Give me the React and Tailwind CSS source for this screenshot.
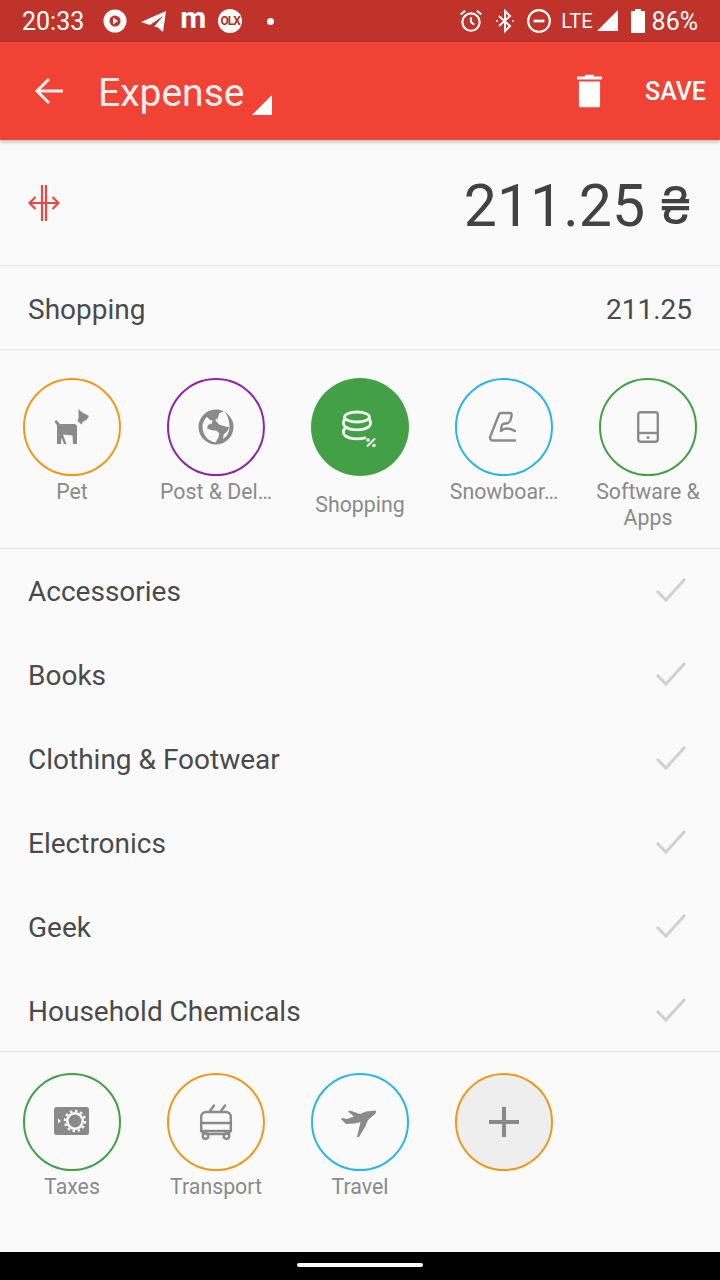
const Glyph = ({ children, ...rest }) => (
  <svg width="54" height="54" viewBox="0 0 54 54" {...rest}>
    {children}
  </svg>
);

const icons = {
  pet: (
    <Glyph fill="currentColor">
      <path d="M9.500 21.500l2-1.500 3.500 4h15l2 2v18h-4l-.5-8.500-9.500-1 3.500 9.500h-2.500l-2.500-6.500-.5 6.500H12V25.500z" />
      <path d="M33.500 9l3 3 7.500 4-2.500 4-3.500 1.500-1.500 3-4-3.500 1-3z" />
    </Glyph>
  ),
  globe: (
    <Glyph fill="currentColor">
      <path
        fillRule="evenodd"
        d="M27 9.500a17.500 17.500 0 1 0 0 35 17.500 17.500 0 0 0 0-35zM13.500 27c0-4 1.700-7.500 4.300-10 1.500.6 2 2 3.100 3l2.700.4-.8 3-3.900 1.500-.8 3.500 3.900 1.500 5.500.8 2.900 2.700-1.200 4.500-2.900 4.500C18.800 41 13.500 34.500 13.500 27zm20.500 12l.6-4.300 3.900-3.900 1.900-3.500-4.900-1-5.400-1.900-3.900-4.500 2.500-1.400 1.600-5.200 4.700-2.300C38 14 40.500 20 40.500 27c0 5-2.700 9.500-6.500 12z"
      />
    </Glyph>
  ),
  coins: (
    <Glyph fill="none" stroke="currentColor" strokeWidth="2.800" strokeLinecap="round">
      <ellipse cx="24" cy="17" rx="12.500" ry="5" />
      <path d="M12 19c-2.500 3-2 6 .5 8 2.500 1.800 7 2.800 11.500 2.800s9-1 11.500-2.800c2.500-2 3-5 .5-8" />
      <path d="M12 28c-2.500 3-2 6 .5 8 2.500 1.800 7 2.800 11.500 2.800 3 0 5.500-.3 8-1" />
      <path d="M34.500 46l7-7" strokeWidth="2" />
      <circle cx="35" cy="40" r="1.800" fill="currentColor" stroke="none" />
      <circle cx="41" cy="45.500" r="1.800" fill="currentColor" stroke="none" />
    </Glyph>
  ),
  snowboard: (
    <Glyph fill="none" stroke="currentColor" strokeWidth="2.400" strokeLinecap="round" strokeLinejoin="round">
      <path d="M38 40.500H16C13 40.500 12.500 38 13.500 36L22 14.500Q22.500 13 24 13H33Q35 13 34.500 16L33.500 20Q33 22 31 23L26 24Q24 25 24 31Q29 26 38 31" />
    </Glyph>
  ),
  phone: (
    <Glyph fill="none" stroke="currentColor" strokeWidth="2.400">
      <rect x="17.200" y="12.200" width="19.600" height="29.600" rx="2.500" />
      <path d="M17 33h20" />
      <circle cx="27" cy="37.400" r="1.500" fill="currentColor" stroke="none" />
    </Glyph>
  ),
  taxes: (
    <Glyph>
      <rect x="9" y="12" width="35" height="28" rx="2.500" fill="currentColor" />
      <circle cx="30" cy="26" r="10" fill="none" stroke="#fafafa" strokeWidth="2.400" strokeDasharray="2.600 2.600" />
      <circle cx="30" cy="26" r="7.700" fill="none" stroke="#fafafa" strokeWidth="2.600" />
      <path d="M13 23.500l3 2.500-3 2.500z" fill="#fafafa" />
    </Glyph>
  ),
  trolley: (
    <Glyph fill="none" stroke="currentColor" strokeWidth="2.400" strokeLinecap="round">
      <path d="M21 16l4-5.500M32 16l4-5.500" />
      <rect x="12.200" y="17" width="29.600" height="22" rx="5" />
      <path d="M12 28h30M12 36h30" />
      <circle cx="16.500" cy="41" r="2.800" />
      <circle cx="37.500" cy="41" r="2.800" />
    </Glyph>
  ),
  plane: (
    <Glyph fill="currentColor">
      <path d="M42.500 15.500L33 16.500L27 19L17 15.500L15 16.500L21 21.500L14 24L9 23L8 24L13 29L22 28.500L27.500 27L24 42L26 42L32 32L35 25L42 19Q44 16 42.500 15.500z" />
    </Glyph>
  ),
};

const top = [
  { label: 'Pet', icon: 'pet', ring: 'border-[#f09819]' },
  { label: 'Post & Del…', icon: 'globe', ring: 'border-[#8e24aa]' },
  { label: 'Shopping', icon: 'coins', selected: true },
  { label: 'Snowboar…', icon: 'snowboard', ring: 'border-[#29b6e6]' },
  { label: ['Software &', 'Apps'], icon: 'phone', ring: 'border-[#43a047]' },
];

const bottom = [
  { label: 'Taxes', icon: 'taxes', ring: 'border-[#43a047]' },
  { label: 'Transport', icon: 'trolley', ring: 'border-[#f09819]' },
  { label: 'Travel', icon: 'plane', ring: 'border-[#29b6e6]' },
];

const subs = ['Accessories', 'Books', 'Clothing & Footwear', 'Electronics', 'Geek', 'Household Chemicals'];

function Category({ item }) {
  const lines = Array.isArray(item.label) ? item.label : [item.label];
  return (
    <div className="w-[144px] flex flex-col items-center">
      <div
        className={
          item.selected
            ? 'w-[98px] h-[98px] rounded-full bg-[#43a047] text-[#f4faf4] flex items-center justify-center'
            : `w-[98px] h-[98px] rounded-full border-2 ${item.ring} text-[#8a8a8a] flex items-center justify-center`
        }
      >
        {icons[item.icon]}
      </div>
      <div className={`${item.selected ? 'mt-[16px]' : 'mt-[3px]'} text-[21.3px] leading-[26px] text-[#8a8a8a] text-center whitespace-nowrap`}>
        {lines.map((l) => (
          <div key={l}>{l}</div>
        ))}
      </div>
    </div>
  );
}

export default function App() {
  return (
    <div className="w-[720px] h-[1280px] flex flex-col bg-[#fafafa] overflow-hidden font-['Roboto',sans-serif]">
      {/* status bar */}
      <div className="h-[42px] bg-[#bf332b] text-white flex items-center pl-[22px] pr-[22px]">
        <span className="text-[25px] leading-none">20:33</span>
        <svg width="24" height="24" viewBox="0 0 24 24" className="ml-[19px]">
          <circle cx="12" cy="12" r="8.500" fill="none" stroke="white" strokeWidth="6" />
          <path d="M10 8.500l5 3.500-5 3.500z" fill="white" />
        </svg>
        <svg width="28" height="24" viewBox="0 0 28 24" className="ml-[13px]">
          <path d="M1 13L26 2l-3 21-6-5-3 0 9-11-13 9z" fill="white" />
        </svg>
        <span className="ml-[12px] text-[30px] leading-[30px] font-bold -mt-[6px]">m</span>
        <div className="ml-[12px] w-[24px] h-[24px] rounded-full bg-white text-[#b03028] flex items-center justify-center text-[12px] font-bold tracking-[-1px]">
          OLX
        </div>
        <div className="ml-[25px] w-[7px] h-[7px] rounded-full bg-white" />
        <div className="ml-auto flex items-center">
          <svg width="26" height="26" viewBox="0 0 24 24" fill="none" stroke="white" strokeWidth="2">
            <circle cx="12" cy="13" r="8" />
            <path d="M12 8.500V13l3 2.500M2.500 6l4-3.500M21.500 6l-4-3.500" />
          </svg>
          <svg width="24" height="26" viewBox="0 0 24 24" fill="none" stroke="white" strokeWidth="2" className="ml-[9px]">
            <path d="M6 7l11 10-5 5V2l5 5L6 17" />
            <circle cx="4" cy="12" r="1" fill="white" stroke="none" />
            <circle cx="20" cy="12" r="1" fill="white" stroke="none" />
          </svg>
          <svg width="26" height="26" viewBox="0 0 24 24" fill="none" stroke="white" strokeWidth="2" className="ml-[9px]">
            <circle cx="12" cy="12" r="10" />
            <path d="M7 12h10" strokeWidth="2.500" />
          </svg>
          <span className="ml-[9px] text-[20px] leading-none">LTE</span>
          <svg width="22" height="22" viewBox="0 0 22 22" className="ml-[4px]">
            <path d="M0 21L21 0v21z" fill="white" />
          </svg>
          <svg width="14" height="24" viewBox="0 0 14 24" className="ml-[12px]">
            <path d="M4 0h6v2h3a1 1 0 0 1 1 1v20a1 1 0 0 1-1 1H1a1 1 0 0 1-1-1V3a1 1 0 0 1 1-1h3z" fill="white" />
          </svg>
          <span className="ml-[7px] text-[25px] leading-none">86%</span>
        </div>
      </div>

      {/* toolbar */}
      <div className="h-[98px] bg-[#f14236] text-white flex items-center shadow-[0_2px_4px_rgba(0,0,0,0.25)] z-10">
        <svg width="30" height="30" viewBox="0 0 30 30" fill="none" stroke="#fdeeee" strokeWidth="3" className="ml-[34px]">
          <path d="M29 15H3M15 3L3 15l12 12" />
        </svg>
        <span className="ml-[34px] mt-[5px] text-[39px] leading-none text-[#fdeeee]">Expense</span>
        <svg width="20" height="20" viewBox="0 0 20 20" className="ml-[8px] mt-[28px]">
          <path d="M0 20L20 0v20z" fill="white" />
        </svg>
        <svg width="25" height="34" viewBox="0 0 26 34" className="ml-auto">
          <path d="M9 0h8l1 2h8v3H0V2h8zM2 7h22v25a2 2 0 0 1-2 2H4a2 2 0 0 1-2-2z" fill="white" />
        </svg>
        <span className="ml-[43px] mr-[14px] text-[25px] leading-none font-medium">SAVE</span>
      </div>

      {/* amount */}
      <div className="h-[126px] border-b border-[#e6e6e6] flex items-center justify-between pl-[28px] pr-[28px]">
        <svg width="32" height="36" viewBox="0 0 32 36" fill="none" stroke="#e8483f" strokeWidth="2.200">
          <path d="M14 0v36M18 0v36" />
          <path d="M1.500 18h29M7.500 12l-6 6 6 6M24.500 12l6 6-6 6" />
        </svg>
        <div className="flex items-center text-[#424242] mt-[6px]">
          <span className="text-[59px] leading-none">211.25</span>
          <span className="ml-[14px] text-[52px] leading-none font-['Inter',sans-serif]">₴</span>
        </div>
      </div>

      {/* total row */}
      <div className="h-[84px] border-b border-[#e6e6e6] flex items-center justify-between pl-[28px] pr-[28px] text-[#4a4a4a]">
        <span className="text-[28px] mt-[4px]">Shopping</span>
        <span className="text-[28px] mt-[4px]">211.25</span>
      </div>

      {/* categories */}
      <div className="h-[199px] border-b border-[#e6e6e6] flex pt-[28px]">
        {top.map((c) => (
          <Category key={c.icon} item={c} />
        ))}
      </div>

      {/* sub categories */}
      <div className="h-[503px] border-b border-[#e6e6e6] flex flex-col">
        {subs.map((s) => (
          <div key={s} className="h-[84px] shrink-0 flex items-center justify-between pl-[28px] pr-[33px]">
            <span className="text-[28px] mt-[2px] text-[#4a4a4a]">{s}</span>
            <svg width="32" height="26" viewBox="0 0 32 26" fill="none" stroke="#d0d0d0" strokeWidth="3" className="-mt-[2px]">
              <path d="M2 14l9 9L30 2" />
            </svg>
          </div>
        ))}
      </div>

      {/* bottom categories */}
      <div className="flex-1 flex pt-[21px]">
        {bottom.map((c) => (
          <Category key={c.icon} item={c} />
        ))}
        <div className="w-[144px] flex flex-col items-center">
          <div className="w-[98px] h-[98px] rounded-full border-2 border-[#f09819] bg-[#eeeeee] text-[#8a8a8a] flex items-center justify-center">
            <svg width="32" height="32" viewBox="0 0 32 32" fill="currentColor">
              <path d="M14 1h4v13h13v4H18v13h-4V18H1v-4h13z" />
            </svg>
          </div>
        </div>
      </div>

      {/* nav bar */}
      <div className="h-[28px] bg-black flex items-center justify-center">
        <div className="w-[126px] h-[4px] rounded-full bg-white -mt-[2px]" />
      </div>
    </div>
  );
}
